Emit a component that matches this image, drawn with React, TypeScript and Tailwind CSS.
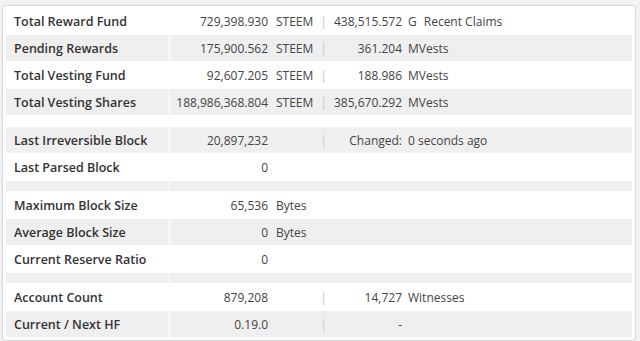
import React from "react";

type Row = {
  label: string;
  v1?: string;
  u1?: string;
  sep?: boolean;
  v2?: string;
  u2?: string;
  extra?: string;
};

// null = thin spacer row between groups
const rows: (Row | null)[] = [
  { label: "Total Reward Fund", v1: "729,398.930", u1: "STEEM", sep: true, v2: "438,515.572", u2: "G", extra: "Recent Claims" },
  { label: "Pending Rewards", v1: "175,900.562", u1: "STEEM", sep: true, v2: "361.204", u2: "MVests" },
  { label: "Total Vesting Fund", v1: "92,607.205", u1: "STEEM", sep: true, v2: "188.986", u2: "MVests" },
  { label: "Total Vesting Shares", v1: "188,986,368.804", u1: "STEEM", sep: true, v2: "385,670.292", u2: "MVests" },
  null,
  { label: "Last Irreversible Block", v1: "20,897,232", sep: true, v2: "Changed:", u2: "0 seconds ago" },
  { label: "Last Parsed Block", v1: "0" },
  null,
  { label: "Maximum Block Size", v1: "65,536", u1: "Bytes" },
  { label: "Average Block Size", v1: "0", u1: "Bytes" },
  { label: "Current Reserve Ratio", v1: "0" },
  null,
  { label: "Account Count", v1: "879,208", sep: true, v2: "14,727", u2: "Witnesses" },
  { label: "Current / Next HF", v1: "0.19.0", sep: true, v2: "-" },
];

export default function App() {
  return (
    <div
      className="min-h-screen bg-[#f2f2f2] pt-[5px] pl-[2px]"
      style={{ fontFamily: '"Open Sans", "Liberation Sans", sans-serif' }}
    >
      <div className="w-[634px] rounded-[4px] border border-[#d9d9d9] bg-white px-[3px] pt-[2px] pb-[2px] shadow-[0_0_2px_rgba(0,0,0,0.06)]">
        {rows.map((row, idx) => {
          const grey = idx % 2 === 1;
          const bg = grey ? "bg-[#efefef]" : "bg-white";
          if (!row) {
            return (
              <div
                key={idx}
                className={`grid h-[11px] grid-cols-[164px_1fr] border-b border-white ${bg}`}
              >
                <div className="border-r border-white" />
                <div />
              </div>
            );
          }
          return (
            <div
              key={idx}
              className={`grid h-[27px] grid-cols-[164px_101px_45px_15px_74px_1fr] items-start border-b border-white pt-[1px] text-[12px] leading-[26px] ${bg}`}
            >
              <div className="-mt-[1px] h-[26px] border-r border-white pt-[1px] pl-[8px] text-[12.5px] font-semibold text-[#333]">
                {row.label}
              </div>
              <div className="pr-[3px] text-right text-[#444]">{row.v1}</div>
              <div className="pl-[5px] text-[#444]">{row.u1}</div>
              <div className="text-center text-[#c4c4c4]">{row.sep ? "|" : ""}</div>
              <div className="whitespace-nowrap pr-[3px] text-right text-[#444]">{row.v2}</div>
              <div className="whitespace-nowrap pl-[3px] text-[#444]">
                {row.u2}
                {row.extra && <span className="pl-[7px]">{row.extra}</span>}
              </div>
            </div>
          );
        })}
      </div>
    </div>
  );
}
